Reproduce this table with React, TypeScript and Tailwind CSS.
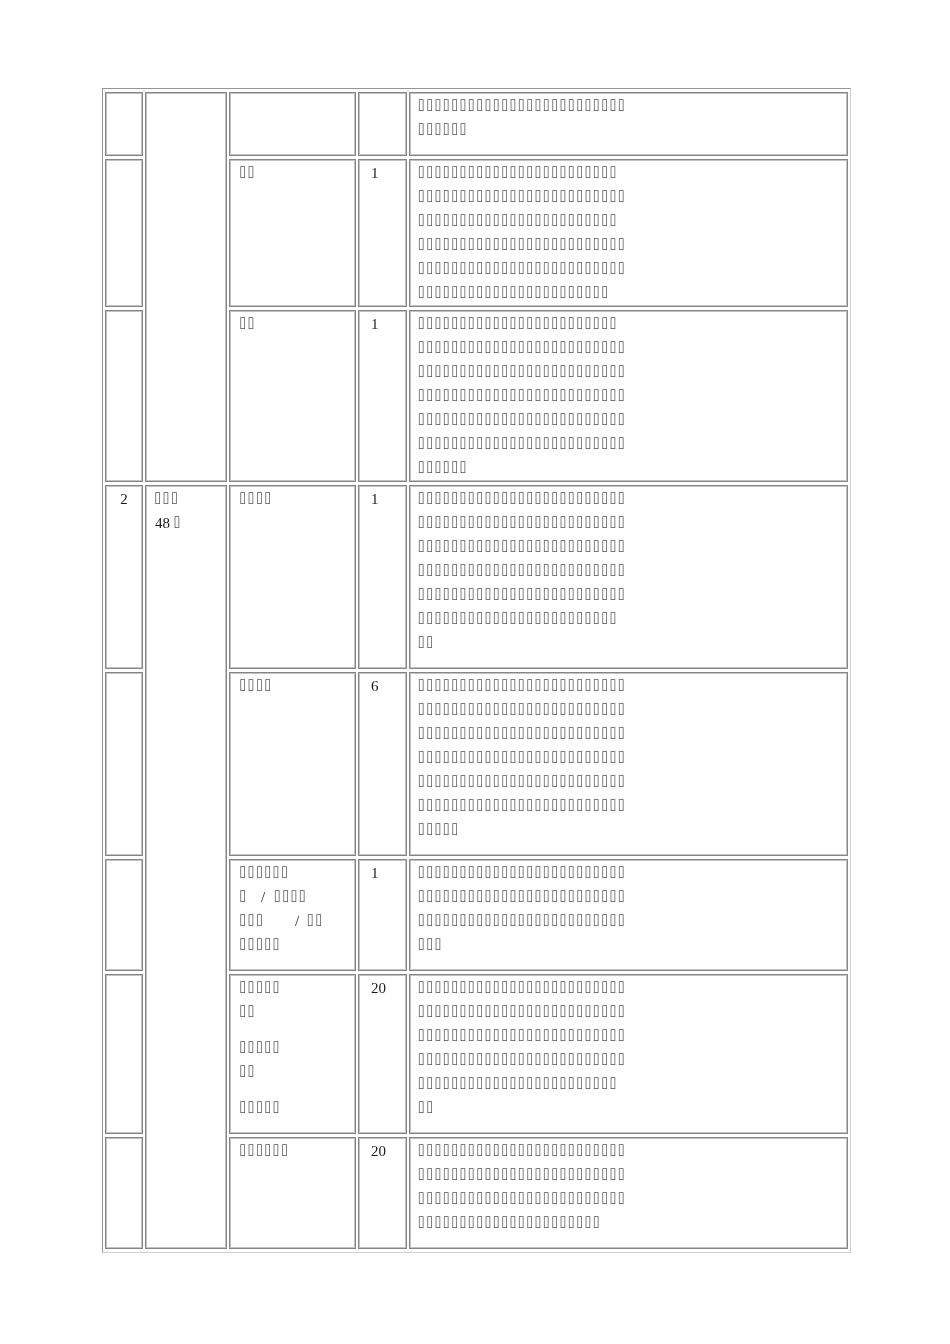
import React from "react";

const BOX = "\u2337";
const t = (n: number) => BOX.repeat(n);

// splits a line into missing-glyph box runs and plain serif text
function Txt({ s }: { s: string }) {
  const parts = s.split(/(\u2337+)/).filter(Boolean);
  return (
    <>
      {parts.map((p, i) =>
        p[0] === BOX ? (
          <span
            key={i}
            className="font-['DejaVu_Sans_Mono',monospace] text-[13px] leading-[16px] align-[1px] tracking-[0.507px] text-[#555]"
          >
            {p}
          </span>
        ) : (
          <span key={i}>{p}</span>
        )
      )}
    </>
  );
}

const Gap = ({ w }: { w: string }) => <span className={`inline-block ${w}`} />;

interface Row {
  no?: string;
  item?: React.ReactNode;
  qty?: string;
  desc: number[];
  spaced: boolean;
}

const cell =
  "align-top border border-[#868686] pt-[1px] pb-[1px] shadow-[inset_1px_1px_0_#c2c2c2,inset_-1px_-1px_0_#c2c2c2]";

const rows: Row[] = [
  { desc: [25, 6], spaced: true },
  { item: <Txt s={t(2)} />, qty: "1", desc: [24, 25, 24, 25, 25, 23], spaced: false },
  { item: <Txt s={t(2)} />, qty: "1", desc: [24, 25, 25, 25, 25, 25, 6], spaced: false },
  { no: "2", item: <Txt s={t(4)} />, qty: "1", desc: [25, 25, 25, 25, 25, 24, 2], spaced: true },
  { item: <Txt s={t(4)} />, qty: "6", desc: [25, 25, 25, 25, 25, 25, 5], spaced: true },
  {
    item: (
      <>
        <div>
          <Txt s={t(6)} />
        </div>
        <div>
          <Txt s={t(1)} />
          <Gap w="w-[13.7px]" />
          <span>/</span>
          <Gap w="w-[8.4px]" />
          <Txt s={t(4)} />
        </div>
        <div>
          <Txt s={t(3)} />
          <Gap w="w-[31px]" />
          <span>/</span>
          <Gap w="w-[7.4px]" />
          <Txt s={t(2)} />
        </div>
        <div>
          <Txt s={t(5)} />
        </div>
      </>
    ),
    qty: "1",
    desc: [25, 25, 25, 3],
    spaced: true,
  },
  {
    item: (
      <>
        <p className="mb-[12px]">
          <Txt s={t(5)} />
          <br />
          <Txt s={t(2)} />
        </p>
        <p className="mb-[12px]">
          <Txt s={t(5)} />
          <br />
          <Txt s={t(2)} />
        </p>
        <p>
          <Txt s={t(5)} />
        </p>
      </>
    ),
    qty: "20",
    desc: [25, 25, 25, 25, 24, 2],
    spaced: true,
  },
  { item: <Txt s={t(6)} />, qty: "20", desc: [25, 25, 25, 22], spaced: true },
];

export default function App() {
  return (
    <div className="min-h-[1344px] bg-white pt-[88px] pl-[102px] font-['Liberation_Serif',serif] text-[15px] leading-[24px] text-[#1a1a1a]">
      <table className="w-[749px] table-fixed border-separate border-spacing-x-[2px] border-spacing-y-[3px] border border-t-[#969696] border-l-[#969696] border-r-[#d0d0d0] border-b-[#d0d0d0] will-change-transform">
        <tbody>
          {rows.map((r, i) => (
            <tr key={i}>
              <td className={`${cell} w-[38px] text-center`}>{r.no}</td>
              {i === 0 && <td rowSpan={3} className={`${cell} w-[82px]`} />}
              {i === 3 && (
                <td rowSpan={5} className={`${cell} pl-[8px]`}>
                  <div>
                    <Txt s={t(3)} />
                  </div>
                  <div className="pl-[1px]">
                    48
                    <Gap w="w-[3.3px]" />
                    <Txt s={t(1)} />
                  </div>
                </td>
              )}
              <td className={`${cell} w-[127px] pl-[9px]`}>{r.item}</td>
              <td className={`${cell} w-[49px] pl-[12px]`}>{r.qty}</td>
              <td className={`${cell} w-[439px] pl-[7.6px]`}>
                <p className={r.spaced ? "mb-[12px]" : ""}>
                  {r.desc.map((n, j) => (
                    <React.Fragment key={j}>
                      {j > 0 && <br />}
                      <Txt s={t(n)} />
                    </React.Fragment>
                  ))}
                </p>
              </td>
            </tr>
          ))}
        </tbody>
      </table>
    </div>
  );
}
